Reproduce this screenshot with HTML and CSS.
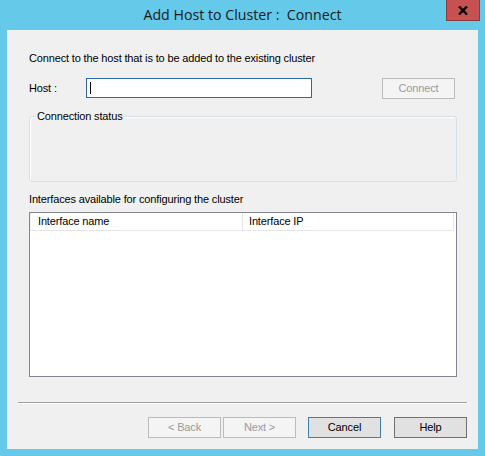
FILE: index.html
```html
<!DOCTYPE html>
<html>
<head>
<meta charset="utf-8">
<link rel="stylesheet" href="styles.css">
</head>
<body>
<div class="window">
  <div class="titlebar">
    <span class="title">Add Host to Cluster :&nbsp; Connect</span>
    <div class="close">
      <svg width="10" height="9" viewBox="0 0 10 9"><path d="M1 0.5 L9 8.5 M9 0.5 L1 8.5" stroke="#000" stroke-width="2.4" fill="none"/></svg>
    </div>
  </div>
  <div class="client">
    <div class="main">
      <div class="text-line">Connect to the host that is to be added to the existing cluster</div>
      <div class="host-row">
        <span class="host-label">Host :</span>
        <div class="textbox"><span class="caret"></span></div>
        <div class="btn btn-disabled connect">Connect</div>
      </div>
      <fieldset class="group">
        <legend class="group-title">Connection status</legend>
      </fieldset>
      <div class="text-line iface-label">Interfaces available for configuring the cluster</div>
      <div class="listview">
        <div class="lv-header">
          <div class="lv-col lv-col-name">Interface name</div>
          <div class="lv-col lv-col-ip">Interface IP</div>
        </div>
      </div>
    </div>
    <div class="footer">
      <div class="separator"></div>
      <div class="buttons">
        <div class="btn btn-disabled">&lt; Back</div>
        <div class="btn btn-disabled next">Next &gt;</div>
        <div class="btn btn-default cancel">Cancel</div>
        <div class="btn btn-normal help">Help</div>
      </div>
    </div>
  </div>
</div>
</body>
</html>
```
FILE: styles.css
```css
html, body {
  margin: 0;
  padding: 0;
}
body {
  font-family: "Liberation Sans", Arial, sans-serif;
  font-size: 11px;
  letter-spacing: -0.15px;
  color: #000;
}
.window {
  width: 485px;
  height: 456px;
  background: #65c9ea;
  display: flex;
  flex-direction: column;
}
.titlebar {
  height: 30px;
  position: relative;
  display: flex;
  align-items: center;
  justify-content: center;
}
.title {
  font-family: "Open Sans", "Noto Sans", sans-serif;
  font-size: 14.2px;
  letter-spacing: 0;
  color: #1a1a1a;
  line-height: 20px;
}
.close {
  position: absolute;
  top: 0;
  right: 5px;
  width: 34px;
  height: 21px;
  box-sizing: border-box;
  background: #c75050;
  border: 1px solid #8a3a3a;
  border-top: none;
  display: flex;
  align-items: center;
  justify-content: center;
}
.client {
  flex: 1;
  margin: 0 7px 7px 7px;
  background: #f0f0f0;
  display: flex;
  flex-direction: column;
}
.main {
  padding: 22px 21px 0 22px;
  display: flex;
  flex-direction: column;
}
.text-line {
  height: 13px;
  line-height: 13px;
  white-space: nowrap;
}
.host-row {
  margin-top: 13px;
  display: flex;
  align-items: flex-start;
  height: 21px;
}
.host-label {
  width: 57px;
  line-height: 20px;
}
.textbox {
  width: 226px;
  height: 20px;
  box-sizing: border-box;
  background: #fff;
  border: 1px solid #2f69a3;
  display: flex;
  align-items: center;
  padding-left: 3px;
}
.caret {
  width: 1px;
  height: 12px;
  background: #000;
}
.btn {
  width: 73px;
  height: 21px;
  box-sizing: border-box;
  display: flex;
  align-items: center;
  justify-content: center;
  line-height: 13px;
}
.btn-disabled {
  background: #f4f4f4;
  border: 1px solid #bcbcbc;
  color: #9a9a9a;
}
.btn-default {
  background: #e1e1e1;
  border: 1px solid #3c7fb1;
}
.btn-normal {
  background: #e1e1e1;
  border: 1px solid #707070;
}
.connect {
  margin-left: auto;
  margin-right: 2px;
}
.group {
  margin: 11px 0 0 0;
  padding: 0;
  height: 72px;
  box-sizing: border-box;
  border: 1px solid #d5dfe5;
  border-radius: 3px;
  box-shadow: inset 1px 1px 0 #fff;
}
.group-title {
  margin-left: 6px;
  padding: 0 1px;
  line-height: 13px;
  height: 13px;
}
.iface-label {
  margin-top: 11px;
}
.listview {
  margin-top: 6px;
  height: 165px;
  box-sizing: border-box;
  background: #fff;
  border: 1px solid #828790;
  padding-right: 2px;
}
.lv-header {
  display: flex;
  height: 18px;
}
.lv-col {
  box-sizing: border-box;
  height: 18px;
  line-height: 17px;
  border-bottom: 1px solid #e5e5e5;
  border-right: 1px solid #e5e5e5;
  white-space: nowrap;
}
.lv-col-name {
  width: 213px;
  padding-left: 7px;
  border-left: 1px solid #f0f0f0;
}
.lv-col-ip {
  flex: 1;
  padding-left: 6px;
}
.footer {
  margin-top: 25px;
  padding: 0 11px;
  display: flex;
  flex-direction: column;
}
.separator {
  height: 1px;
  background: #a0a0a0;
  border-bottom: 1px solid #fff;
}
.buttons {
  margin-top: 13px;
  display: flex;
  justify-content: flex-end;
}
.next {
  margin-left: 2px;
}
.cancel {
  margin-left: 12px;
}
.help {
  margin-left: 13px;
}
```
